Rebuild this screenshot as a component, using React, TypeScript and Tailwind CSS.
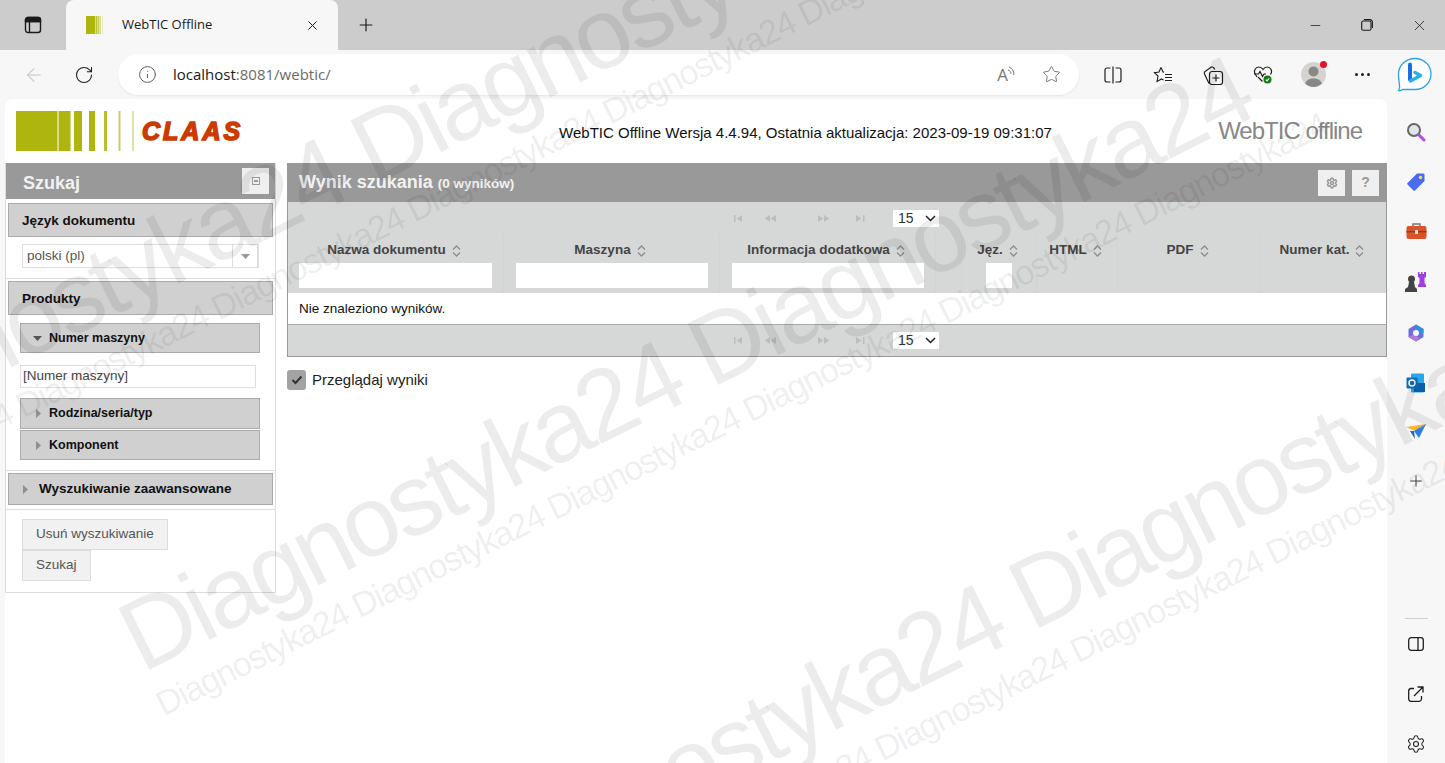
import { ArrowLeft, Info, Minus, Plus, RotateCw, Settings, Star, X } from "lucide-react";

const SANS = "font-['Liberation_Sans',Arial,sans-serif]";
const UI = "font-['Open_Sans','Noto_Sans',sans-serif]";

const wm = (count: number) => Array(count).fill("Diagnostyka24").join(" ");

const Watermark = () => (
  <div className={`pointer-events-none absolute inset-0 overflow-hidden text-black/[0.075] ${SANS}`}>
    <div className="absolute left-[470px] top-[830px] origin-bottom-left -rotate-[26.6deg] whitespace-nowrap text-[100px] leading-none tracking-[-0.038em]">{wm(2)}</div>
    <div className="absolute left-[149px] top-[587px] origin-bottom-left -rotate-[26.6deg] whitespace-nowrap text-[100px] leading-none tracking-[-0.038em]">{wm(2)}</div>
    <div className="absolute left-[-188px] top-[384px] origin-bottom-left -rotate-[26.6deg] whitespace-nowrap text-[100px] leading-none tracking-[-0.038em]">{wm(2)}</div>
    <div className="absolute left-[166px] top-[687px] origin-bottom-left -rotate-[26.6deg] whitespace-nowrap text-[34.4px] leading-none tracking-[-0.038em]">{wm(6)}</div>
    <div className="absolute left-[-170px] top-[487px] origin-bottom-left -rotate-[26.6deg] whitespace-nowrap text-[34.4px] leading-none tracking-[-0.038em]">{wm(6)}</div>
    <div className="absolute left-[689px] top-[830px] origin-bottom-left -rotate-[26.6deg] whitespace-nowrap text-[34.4px] leading-none tracking-[-0.038em]">{wm(4)}</div>
  </div>
);

const TabStrip = () => (
  <div className="flex h-[50px] shrink-0 items-center bg-[#cccccc] text-[#1a1a1a]">
    <div className="flex w-[66px] justify-center">
      <svg width="18" height="18" viewBox="0 0 18 18" fill="none" stroke="#1a1a1a" strokeWidth="1.4">
        <rect x="1.5" y="1.5" width="15" height="15" rx="2.5" />
        <path d="M1.5 5.5h15M5.5 5.5v11" />
        <path d="M1.5 4a2.5 2.5 0 0 1 2.5-2.5h10A2.5 2.5 0 0 1 16.5 4v1.5h-15z" fill="#1a1a1a" />
      </svg>
    </div>
    <div className={`flex h-[50px] w-[272px] items-center rounded-t-[8px] bg-[#f7f7f7] pl-[20px] pr-[18px] ${UI}`}>
      <svg width="18" height="18" viewBox="0 0 18 18">
        <rect width="9" height="18" fill="#aeb50f" />
        <rect x="9.5" width="2" height="18" fill="#bcc23a" />
        <rect x="12" width="1.5" height="18" fill="#c9ce66" />
        <rect x="14" width="1" height="18" fill="#d9dc94" />
        <rect x="16" width="1" height="18" fill="#e8eac0" />
      </svg>
      <span className="ml-[18px] flex-1 text-[13px]">WebTIC Offline</span>
      <X size={15} strokeWidth={1.6} />
    </div>
    <div className="flex w-[56px] justify-center">
      <Plus size={20} strokeWidth={1.4} />
    </div>
    <div className="ml-auto flex items-center">
      <div className="flex w-[52px] justify-center"><Minus size={15} strokeWidth={1.2} /></div>
      <div className="flex w-[52px] justify-center">
        <svg width="12" height="12" viewBox="0 0 12 12" fill="none" stroke="#1a1a1a" strokeWidth="1.1">
          <rect x="0.7" y="2" width="9.3" height="9.3" rx="1.6" />
          <path d="M3 .6h6a2.4 2.4 0 0 1 2.4 2.4v6" />
        </svg>
      </div>
      <div className="flex w-[52px] justify-center"><X size={17} strokeWidth={1.1} /></div>
    </div>
  </div>
);

const ToolbarIcons = () => (
  <>
    <div className="flex w-[51px] justify-center">
      <svg width="20" height="20" viewBox="0 0 20 20" fill="none" stroke="#1f1f1f" strokeWidth="1.2">
        <path d="M7.5 3H4a2 2 0 0 0-2 2v10a2 2 0 0 0 2 2h3.5M12.5 3H16a2 2 0 0 1 2 2v10a2 2 0 0 1-2 2h-3.5M10 1.5v17" />
      </svg>
    </div>
    <div className="flex w-[50px] justify-center">
      <svg width="20" height="20" viewBox="0 0 20 20" fill="none" stroke="#1f1f1f" strokeWidth="1.1">
        <path d="M8 2.500l2 4.500 1 .1M3 7.500l-1.500.2L5 11 4 16.500 8.500 14l2 1.100" />
        <path d="M8 2.500 6 7 1.500 7.700" />
        <path d="M12 9.500h7M12 12.500h7M12 15.500h7" />
      </svg>
    </div>
    <div className="flex w-[50px] justify-center">
      <svg width="22" height="22" viewBox="0 0 22 22" fill="none" stroke="#1f1f1f" strokeWidth="1.2">
        <path d="M7 19.500 2.500 10a2 2 0 0 1 1-2.700l5.500-4a2 2 0 0 1 2.800.6l1 1.600" />
        <rect x="7.500" y="7.500" width="13" height="13" rx="2.500" />
        <path d="M14 10.500v7M10.500 14h7" />
      </svg>
    </div>
    <div className="flex w-[50px] justify-center">
      <svg width="22" height="22" viewBox="0 0 22 22" fill="none">
        <path d="M5 13 3.500 10.500C1 7 3.500 3 6.800 3c2 0 3.200 1 4.200 2.500C12 4 13.200 3 15.200 3c3.300 0 5.800 4 3.300 7.500" stroke="#1f1f1f" strokeWidth="1.2" />
        <path d="M2 10h4.500l1.500-2.500 2.500 5 1.500-2.500h2" stroke="#1f1f1f" strokeWidth="1.2" />
        <path d="M6 13l4.500 4.500" stroke="#1f1f1f" strokeWidth="1.2" />
        <circle cx="15.500" cy="15.500" r="4" fill="#107c10" />
        <path d="M13.700 15.600l1.300 1.300 2.300-2.500" stroke="#fff" strokeWidth="1.100" />
      </svg>
    </div>
    <div className="relative flex w-[50px] justify-center">
      <div className="h-[25px] w-[25px] overflow-hidden rounded-full bg-[#d5d3d0]">
        <svg width="25" height="25" viewBox="0 0 25 25">
          <circle cx="12.500" cy="9.500" r="5" fill="#8a8886" />
          <path d="M3.500 25c0-6 4-8.500 9-8.500s9 2.500 9 8.500z" fill="#8a8886" />
        </svg>
      </div>
      <div className="absolute left-[32px] top-[-1px] h-[7px] w-[7px] rounded-full bg-[#e81123]" />
    </div>
    <div className="flex w-[49px] justify-center gap-[3px]">
      <span className="h-[3px] w-[3px] rounded-full bg-[#1f1f1f]" />
      <span className="h-[3px] w-[3px] rounded-full bg-[#1f1f1f]" />
      <span className="h-[3px] w-[3px] rounded-full bg-[#1f1f1f]" />
    </div>
  </>
);

const Toolbar = () => (
  <div className="flex h-[49px] shrink-0 items-center bg-[#f7f7f7]">
    <div className="flex w-[67px] justify-center text-[#c4c4c4]"><ArrowLeft size={22} strokeWidth={1.1} /></div>
    <div className="flex w-[34px] justify-center text-[#1f1f1f]"><RotateCw size={20} strokeWidth={1.3} /></div>
    <div className="ml-[17px] flex h-[41px] w-[961px] items-center rounded-full bg-white pl-[20px] pr-[18px] shadow-[0_1px_2px_rgba(0,0,0,0.08)]">
      <Info size={19} strokeWidth={1.2} className="text-[#555]" />
      <span className={`ml-[16px] flex-1 text-[15px] ${UI} text-[#6a6a6a]`}>
        <span className="text-[#1a1a1a]">localhost</span>:8081/webtic/
      </span>
      <div className="mr-[26px] flex items-start text-[#777]">
        <span className={`text-[17px] leading-none ${UI}`}>A</span>
        <svg width="8" height="10" viewBox="0 0 8 10" fill="none" stroke="#777" strokeWidth="1">
          <path d="M1 1c3 1 5 4 5 8M0 4c2 .5 3 2 3 4" />
        </svg>
      </div>
      <Star size={19} strokeWidth={1.1} className="text-[#666]" />
    </div>
    <div className="ml-[8px] flex items-center">
      <ToolbarIcons />
    </div>
  </div>
);

const SectionHead = ({ children, className }: { children: React.ReactNode; className: string }) => (
  <div className={`flex items-center border border-[#aaaaaa] bg-[#d0d0d0] font-bold text-[#111] ${className}`}>{children}</div>
);

const Caret = ({ open }: { open?: boolean }) =>
  open ? (
    <svg width="9" height="5" viewBox="0 0 9 5"><path d="M0 0h9L4.500 5z" fill="#555" /></svg>
  ) : (
    <svg width="5" height="9" viewBox="0 0 5 9"><path d="M0 0v9l5-4.500z" fill="#8f8f8f" /></svg>
  );

const SearchPanel = () => (
  <div className="flex h-[430px] w-[271px] shrink-0 flex-col border-x border-b border-[#dddddd]">
    <div className="flex h-[36px] shrink-0 items-center justify-between bg-[#999999] pl-[17px] pr-[6px] text-[18px] font-bold text-[#f2f2f2]">
      <span className="pt-[4px]">Szukaj</span>
      <div className="flex h-[26px] w-[27px] items-center justify-center bg-[#efefef]">
        <div className="flex h-[8px] w-[8px] items-center justify-center border border-[#999]">
          <div className="h-[2px] w-[4px] bg-[#999]" />
        </div>
      </div>
    </div>
    <div className="mx-[2px] mt-[4px]">
      <SectionHead className="h-[34px] pl-[13px] pt-[2px] text-[13.5px]">Język dokumentu</SectionHead>
      <div className="ml-[14px] mt-[7px] flex h-[24px] w-[237px] items-center justify-between border border-[#dddddd] bg-white pl-[4px] text-[13.5px] text-[#555]">
        polski (pl)
        <div className="flex h-[24px] w-[26px] items-center justify-center border border-[#dddddd] bg-white">
          <svg width="9" height="5" viewBox="0 0 9 5"><path d="M0 0h9L4.500 5z" fill="#999" /></svg>
        </div>
      </div>
    </div>
    <div className="mt-[10px] border-t border-[#dddddd] px-[2px] pt-[2px]">
      <SectionHead className="h-[34px] pl-[13px] pt-[2px] text-[13.5px]">Produkty</SectionHead>
      <div className="ml-[12px] w-[240px]">
        <SectionHead className="mt-[8px] h-[30px] gap-[7px] pl-[12px] text-[12.5px]">
          <Caret open />
          Numer maszyny
        </SectionHead>
        <div className="mt-[12px] flex h-[23px] w-[236px] items-center border border-[#dddddd] bg-white pl-[2px] text-[13.5px] text-[#444]">[Numer maszyny]</div>
        <SectionHead className="mt-[10px] h-[31px] gap-[8px] pl-[15px] text-[12.5px]">
          <Caret />
          Rodzina/seria/typ
        </SectionHead>
        <SectionHead className="mt-[1px] h-[30px] gap-[8px] pl-[15px] text-[12.5px]">
          <Caret />
          Komponent
        </SectionHead>
      </div>
    </div>
    <div className="mt-[10px] border-t border-[#dddddd] px-[2px] pt-[2px]">
      <SectionHead className="h-[32px] gap-[11px] pl-[14px] text-[13.5px]">
        <Caret />
        Wyszukiwanie zaawansowane
      </SectionHead>
    </div>
    <div className="mt-[4px] flex flex-col items-start border-t border-[#dddddd] pl-[16px] pt-[9px] text-[13.5px] text-[#555]">
      <div className="flex h-[31px] items-center border border-[#dddddd] bg-[#f1f1f1] px-[13px]">Usuń wyszukiwanie</div>
      <div className="flex h-[31px] items-center border border-[#dddddd] bg-[#f1f1f1] px-[13px]">Szukaj</div>
    </div>
  </div>
);

const PagerIcon = ({ d }: { d: string }) => (
  <svg width="12" height="7" viewBox="0 0 12 7"><path d={d} fill="#bdbdbd" /></svg>
);

const Pager = ({ className }: { className: string }) => (
  <div className={`flex shrink-0 items-center bg-[#d6d8d8] ${className}`}>
    <div className="ml-[445px] flex w-[31px] justify-start"><PagerIcon d="M1 0h1.500v7H1zM9 0v7L3.500 3.500z" /></div>
    <div className="flex w-[54px] justify-start"><PagerIcon d="M6 0v7L.500 3.500zM12 0v7L6.500 3.500z" /></div>
    <div className="flex w-[37px] justify-start"><PagerIcon d="M0 0v7l5.500-3.500zM6 0v7l5.500-3.500z" /></div>
    <div className="flex w-[38px] justify-start"><PagerIcon d="M1 0v7l5.500-3.500zM8 0h1.500v7H8z" /></div>
    <div className="flex h-[17px] w-[46px] items-center justify-between bg-white pl-[5px] pr-[3px] text-[14px] text-[#333]">
      15
      <svg width="11" height="7" viewBox="0 0 11 7" fill="none" stroke="#222" strokeWidth="1.500"><path d="M1 1l4.500 4.500L10 1" /></svg>
    </div>
  </div>
);

const SortIcon = () => (
  <svg width="9" height="12" viewBox="0 0 9 12" fill="none" stroke="#8c8c8c" strokeWidth="1.300" className="ml-[6px]">
    <path d="M1 4.500 4.500 1 8 4.500M1 7.500 4.500 11 8 7.500" />
  </svg>
);

const columns = [
  { label: "Nazwa dokumentu", input: "w-[193px]" },
  { label: "Maszyna", input: "w-[192px]" },
  { label: "Informacja dodatkowa", input: "w-[192px]" },
  { label: "", input: "" },
  { label: "Jęz.", input: "w-[26px]" },
  { label: "HTML", input: "" },
  { label: "PDF", input: "" },
  { label: "Numer kat.", input: "" },
];

const ResultsPanel = () => (
  <div className="ml-[11px] flex w-[1100px] flex-col">
    <div className="flex h-[39px] items-center justify-between bg-[#999999] pl-[12px] pr-[8px] font-bold text-[#f2f2f2]">
      <span className="text-[18px]">
        Wynik szukania <span className="text-[13.5px] font-bold">(0 wyników)</span>
      </span>
      <div className="flex gap-[7px]">
        <div className="flex h-[26px] w-[27px] items-center justify-center bg-[#efefef] text-[#999]"><Settings size={12} strokeWidth={3} /></div>
        <div className="flex h-[26px] w-[27px] items-center justify-center bg-[#efefef] text-[14px] text-[#999]">?</div>
      </div>
    </div>
    <div className="border border-t-0 border-[#999999]">
      <Pager className="h-[33px]" />
      <div className="grid h-[58px] grid-cols-[216px_216px_216px_26px_75px_81px_143px_125px] bg-[#d6d8d8]">
        {columns.map((col, i) => (
          <div key={i} className="flex flex-col items-center border-r border-[#d2d4d4] last:border-r-0">
            <div className="flex h-[28px] items-center whitespace-nowrap pr-[3px] pt-[3px] text-[13.5px] font-bold text-[#444]">
              {col.label}
              {col.label && <SortIcon />}
            </div>
            {col.input && <div className={`h-[25px] bg-white ${col.input}`} />}
          </div>
        ))}
      </div>
      <div className="flex h-[32px] items-center border-b border-[#aaaaaa] bg-white pl-[11px] pt-[1px] text-[13.5px] text-[#111]">Nie znaleziono wyników.</div>
      <Pager className="h-[31px]" />
    </div>
    <label className="mt-[12px] flex items-center gap-[6px] text-[15px] text-[#222]">
      <span className="flex h-[20px] w-[19px] items-center justify-center rounded-[3px] bg-[#a3a3a3]">
        <svg width="12" height="10" viewBox="0 0 12 10" fill="none" stroke="#333" strokeWidth="2"><path d="M1.500 5l3 3 6-6.500" /></svg>
      </span>
      Przeglądaj wyniki
    </label>
  </div>
);

const ClaasLogo = () => (
  <div className="flex items-center">
    <svg width="119" height="40" viewBox="0 0 119 40">
      <rect x="0" width="41.500" height="40" fill="#aeb50f" />
      <rect x="42.500" width="12" height="40" fill="#aeb50f" />
      <rect x="58" width="8" height="40" fill="#aeb50f" />
      <rect x="73" width="6" height="40" fill="#aeb50f" />
      <rect x="88" width="3" height="40" fill="#b9bf33" />
      <rect x="102.500" width="2" height="40" fill="#c8cc66" />
      <rect x="116" width="2" height="40" fill="#e0e2a8" />
    </svg>
    <span className={`ml-[7px] text-[25px] font-bold italic leading-none tracking-[3px] text-[#cc3a00] [-webkit-text-stroke:1.6px_#cc3a00] ${SANS}`}>CLAAS</span>
  </div>
);

const PageBody = () => (
  <div className={`ml-[5px] w-[1382px] flex-1 overflow-hidden rounded-t-[8px] bg-white ${SANS}`}>
    <div className="flex h-[64px] items-center pl-[11px] pr-[25px]">
      <ClaasLogo />
      <div className="ml-[316px] mt-[5px] whitespace-nowrap text-[15px] text-[#111]">WebTIC Offline Wersja 4.4.94, Ostatnia aktualizacja: 2023-09-19 09:31:07</div>
      <div className="ml-auto whitespace-nowrap text-[24px] tracking-[-1px] text-[#888888]">WebTIC offline</div>
    </div>
    <div className="flex items-start">
      <SearchPanel />
      <ResultsPanel />
    </div>
  </div>
);

const SideIcon = ({ children, className }: { children: React.ReactNode; className: string }) => (
  <div className={`flex justify-center ${className}`}>{children}</div>
);

const BingLogo = () => (
  <svg width="36" height="36" viewBox="0 0 36 36" fill="none">
    <path d="M18 1.500c9 0 16 7 16 15.500S27 32.500 18 32.500H5.500c-2 1.500-3 1.500-4 1 1-1.500 1.500-3 1-5C2 25 1.500 21 1.500 17 1.500 8.500 9 1.500 18 1.500z" fill="#fff" stroke="#2aa3e6" strokeWidth="1.300" />
    <path d="M13 7.500v15" stroke="#1a6fe0" strokeWidth="4" strokeLinecap="round" />
    <path d="M13.500 24 23.500 18.500 18 15.500" stroke="#2ab0e8" strokeWidth="3.500" strokeLinejoin="round" strokeLinecap="round" />
  </svg>
);

const Sidebar = () => (
  <div className="flex w-[58px] flex-col">
    <SideIcon className="mt-[23px]">
      <svg width="20" height="20" viewBox="0 0 20 20" fill="none">
        <circle cx="8" cy="8" r="6" fill="#dfe6ec" stroke="#666" strokeWidth="2" />
        <path d="M12.500 12.500 18 18" stroke="#b44ce0" strokeWidth="3" strokeLinecap="round" />
      </svg>
    </SideIcon>
    <SideIcon className="mt-[30px]">
      <svg width="20" height="20" viewBox="0 0 20 20">
        <path d="M11 1.500h6.500a1 1 0 0 1 1 1V9L9 18.500a1 1 0 0 1-1.500 0L1.500 12.500a1 1 0 0 1 0-1.500z" fill="#4a6cf0" />
        <circle cx="14.500" cy="5.500" r="1.800" fill="#f5d36a" />
      </svg>
    </SideIcon>
    <SideIcon className="mt-[29px]">
      <svg width="21" height="20" viewBox="0 0 21 20">
        <path d="M7 5V3h7v2" fill="none" stroke="#777" strokeWidth="1.500" />
        <rect x="0.500" y="5" width="20" height="13" rx="2" fill="#d8542a" />
        <rect x="0.500" y="10" width="20" height="1.500" fill="#a33612" />
        <rect x="9" y="9" width="3" height="4" fill="#e8e8e8" />
      </svg>
    </SideIcon>
    <SideIcon className="mt-[30px]">
      <svg width="22" height="21" viewBox="0 0 22 21">
        <path d="M13 1h1.500v2H16V1h1.500v2H19V1h2v5l-1.500 1v5l1.500 2v2h-8v-2l1.500-2V7L13 6z" fill="#a23ee0" />
        <circle cx="6.500" cy="8" r="3.500" fill="#444" />
        <path d="M4 11h5l1 5 2 2v3H0v-3l3-2z" fill="#444" />
      </svg>
    </SideIcon>
    <SideIcon className="mt-[31px]">
      <svg width="20" height="20" viewBox="0 0 20 20" fill="none">
        <path d="M10 1.500 17.500 6v8L10 18.500 2.500 14V6z" fill="#6e6fdc" />
        <path d="M10 1.500 17.500 6v4H13a3 3 0 0 0-3-3z" fill="#2f8fd8" />
        <path d="M2.500 14l4-2 3.500 1 3 1.500-3 4z" fill="#b678d8" />
        <circle cx="10" cy="10" r="3" fill="#f7f7f7" />
      </svg>
    </SideIcon>
    <SideIcon className="mt-[30px]">
      <svg width="20" height="20" viewBox="0 0 20 20">
        <rect x="5" y="0.500" width="13" height="19" rx="1" fill="#28a8ea" />
        <path d="M8 10h11v9H8z" fill="#0a5fa8" />
        <rect x="0.500" y="4.500" width="11" height="11" rx="1" fill="#0f6cbd" />
        <circle cx="6" cy="10" r="3" fill="none" stroke="#fff" strokeWidth="1.400" />
      </svg>
    </SideIcon>
    <SideIcon className="mt-[31px]">
      <svg width="20" height="16" viewBox="0 0 20 16">
        <path d="M0 3 20 0 9 7z" fill="#f2b632" />
        <path d="M20 0 8 7l5 7z" fill="#2d7fe0" />
        <path d="M4 7l4 0 1 8z" fill="#1f63c4" />
      </svg>
    </SideIcon>
    <SideIcon className="mt-[32px] text-[#333]"><Plus size={18} strokeWidth={1.2} /></SideIcon>
    <div className="mx-auto mt-[128px] h-[1px] w-[23px] bg-[#cfcfcf]" />
    <SideIcon className="mt-[18px]">
      <svg width="16" height="14" viewBox="0 0 16 14" fill="none" stroke="#1f1f1f" strokeWidth="1.300">
        <rect x="0.700" y="0.700" width="14.600" height="12.600" rx="2.500" />
        <path d="M10 .7v12.600" />
      </svg>
    </SideIcon>
    <SideIcon className="mt-[35px]">
      <svg width="16" height="16" viewBox="0 0 16 16" fill="none" stroke="#1f1f1f" strokeWidth="1.300">
        <path d="M6 2.500H3A2.500 2.500 0 0 0 .7 5v8a2.500 2.500 0 0 0 2.500 2.300h8A2.500 2.500 0 0 0 13.500 13v-3" />
        <path d="M6 10 15 1M9.500 1H15v5.500" />
      </svg>
    </SideIcon>
    <SideIcon className="mt-[32px] text-[#1f1f1f]"><Settings size={20} strokeWidth={1.3} /></SideIcon>
  </div>
);

export default function App() {
  return (
    <div className="relative flex h-[763px] w-[1445px] flex-col overflow-hidden bg-[#f7f7f7]">
      <TabStrip />
      <Toolbar />
      <div className="flex min-h-0 flex-1">
        <PageBody />
        <Sidebar />
      </div>
      <div className="absolute left-[1397px] top-[57px]"><BingLogo /></div>
      <Watermark />
    </div>
  );
}
